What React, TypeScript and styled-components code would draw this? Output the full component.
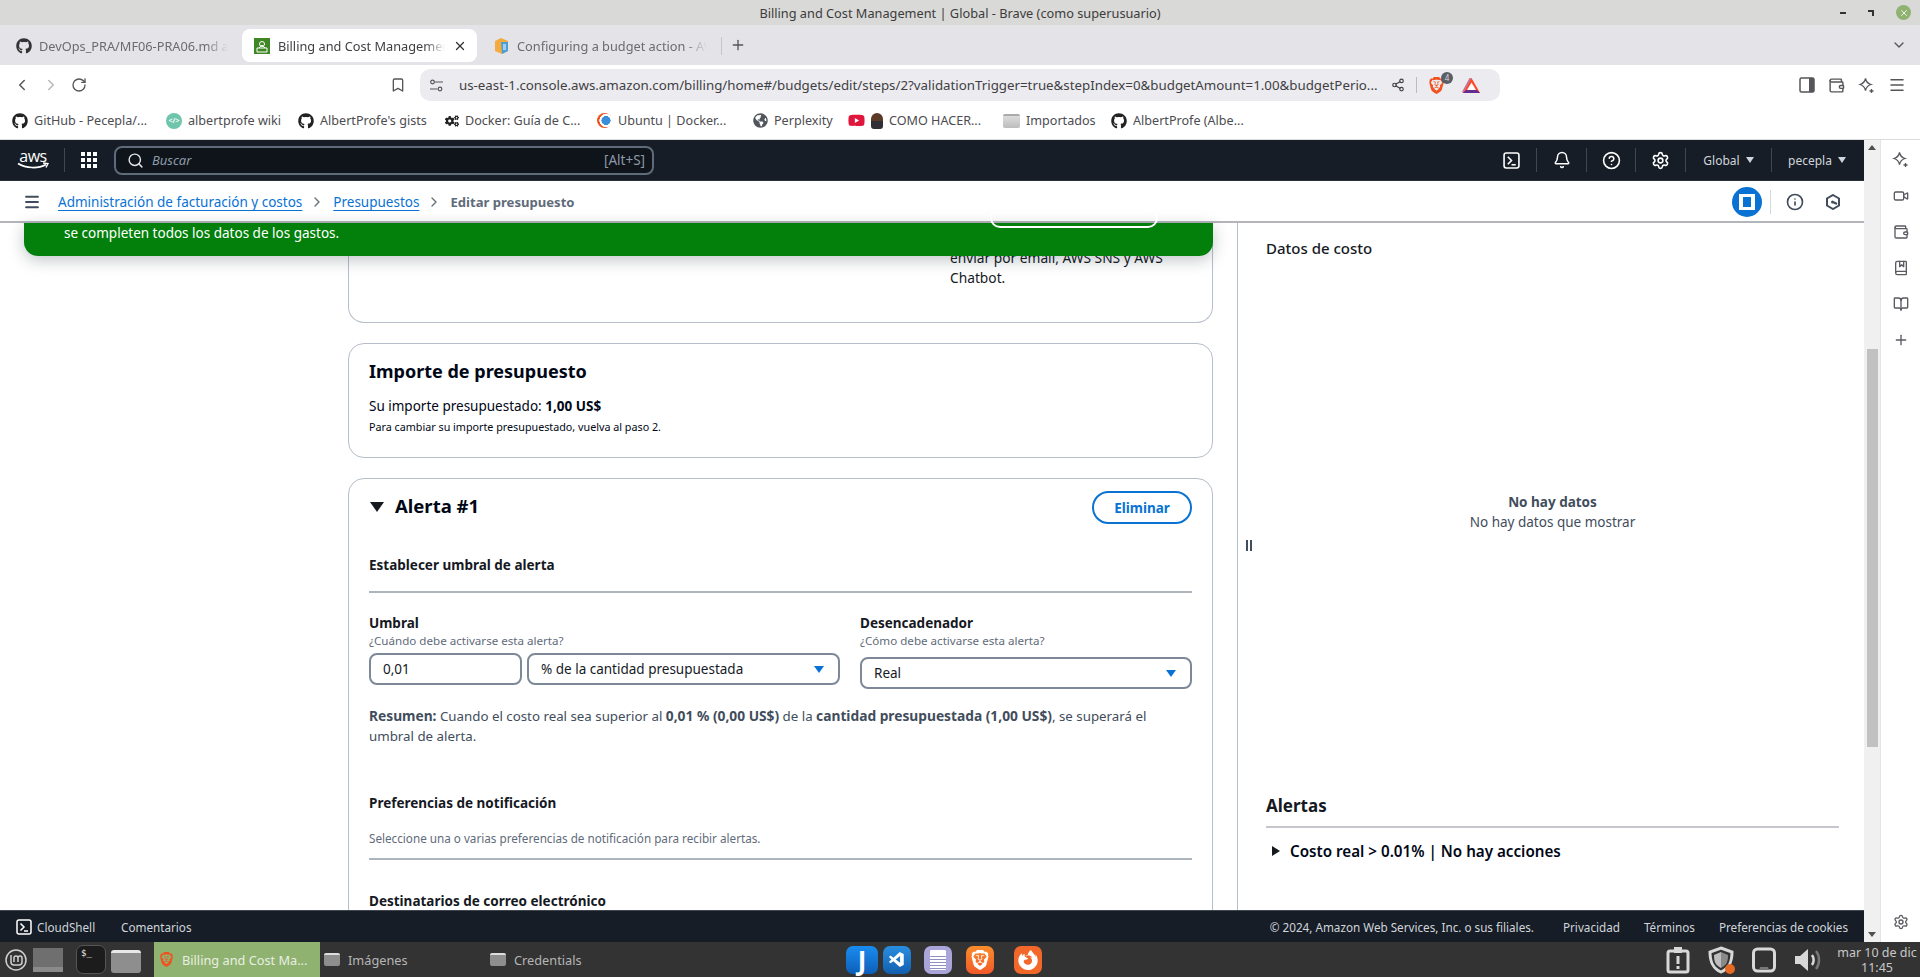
import React from 'react';
import styled, { createGlobalStyle } from 'styled-components';
import {
    Bell,
    Bookmark,
    BookMarked,
    BookOpen,
    ChevronLeft,
    ChevronRight,
    ChevronDown,
    CircleHelp,
    Info,
    Menu,
    Plus,
    RotateCw,
    Search,
    Settings,
    Share2,
    Video,
    Wallet,
    X,
} from 'lucide-react';
import { FaCogs, FaGithub, FaGlobeAmericas, FaYoutube } from 'react-icons/fa';
import { SiBrave, SiFirefoxbrowser } from 'react-icons/si';
import { VscVscode } from 'react-icons/vsc';

const GlobalStyle = createGlobalStyle`
    html, body {
        margin: 0;
        padding: 0;
        width: 1920px;
        height: 977px;
        overflow: hidden;
        background: #fff;
    }
    * {
        box-sizing: border-box;
    }
    body {
        font-family: "Noto Sans", "Open Sans", sans-serif;
    }
`;

const Screen = styled.div`
    display: flex;
    flex-direction: column;
    width: 1920px;
    height: 977px;
    overflow: hidden;
`;

/* browser chrome */

const TitleBar = styled.div`
    display: flex;
    align-items: center;
    justify-content: center;
    position: relative;
    height: 25px;
    background: #d9d9d7;
    font-size: 12.75px;
    color: #3c3c3c;
`;

const WindowControls = styled.div`
    position: absolute;
    right: 9px;
    top: 0;
    height: 25px;
    display: flex;
    align-items: center;
    gap: 22px;
`;

const MinimizeMark = styled.span`
    width: 6px;
    height: 2px;
    background: #333;
`;

const RestoreMark = styled.span`
    width: 6px;
    height: 6px;
    border-top: 2px solid #333;
    border-right: 2px solid #333;
`;

const CloseDot = styled.span`
    display: flex;
    align-items: center;
    justify-content: center;
    width: 15px;
    height: 15px;
    border-radius: 50%;
    background: #8fb271;
    color: #fff;
`;

const TabStrip = styled.div`
    display: flex;
    align-items: flex-start;
    height: 40px;
    padding: 4px 13px 0 4px;
    gap: 4px;
    background: #e3e3e8;
    color: #55555a;
`;

const Tab = styled.div<{ $active?: boolean; $w: number }>`
    display: flex;
    align-items: center;
    gap: ${(p) => (p.$active ? 8 : 7)}px;
    width: ${(p) => p.$w}px;
    height: 33px;
    padding-left: 12px;
    padding-right: 10px;
    border-radius: 8px;
    font-size: 12.75px;
    background: ${(p) => (p.$active ? '#fff' : 'transparent')};
    color: ${(p) => (p.$active ? '#3f3f44' : '#6b6b70')};
`;

const TabLabel = styled.span`
    flex: 1;
    white-space: nowrap;
    overflow: hidden;
    -webkit-mask-image: linear-gradient(90deg, #000 88%, transparent);
    mask-image: linear-gradient(90deg, #000 88%, transparent);
`;

const TabDivider = styled.span`
    width: 1px;
    height: 18px;
    margin-top: 8px;
    background: #c4c4ca;
`;

const NewTab = styled.span`
    display: flex;
    margin: 8px 0 0 4px;
    flex: 1;
`;

const Toolbar = styled.div`
    display: flex;
    align-items: center;
    height: 40px;
    padding: 0 14px 0 13px;
    background: #fff;
    color: #55555a;
`;

const ToolbarGroup = styled.div<{ $gap: number; $w?: number }>`
    display: flex;
    align-items: center;
    gap: ${(p) => p.$gap}px;
    width: ${(p) => (p.$w ? `${p.$w}px` : 'auto')};
`;

const AddressBar = styled.div`
    display: flex;
    align-items: center;
    width: 1080px;
    height: 32px;
    margin: 0 299px 0 0;
    padding: 0 19px 0 9px;
    gap: 11px;
    border-radius: 10px;
    background: #ecebf0;
    font-size: 13.3px;
    color: #3f3f44;
`;

const UrlText = styled.span`
    flex: 1;
    margin-left: 4px;
    white-space: nowrap;
    overflow: hidden;
`;

const AddressSep = styled.span`
    width: 1px;
    height: 16px;
    background: #bcbcc2;
`;

const ShieldWrap = styled.span`
    display: flex;
    position: relative;
    margin-right: 6px;
    color: #f1521f;
`;

const ShieldBadge = styled.span`
    position: absolute;
    right: -8px;
    top: -5px;
    width: 12px;
    height: 12px;
    border-radius: 50%;
    background: #5a5d66;
    color: #ddd;
    font-size: 8px;
    line-height: 12px;
    text-align: center;
`;

const BookmarksBar = styled.div`
    display: flex;
    align-items: center;
    height: 35px;
    padding: 0 0 3px 12px;
    background: #fff;
    border-bottom: 1px solid #dcdce0;
`;

const BookmarkItem = styled.div<{ $w: number }>`
    display: flex;
    align-items: center;
    gap: 6px;
    width: ${(p) => p.$w}px;
    font-size: 12.6px;
    color: #4c4c50;
    white-space: nowrap;
`;

const WikiIcon = styled.span`
    display: flex;
    align-items: center;
    justify-content: center;
    width: 16px;
    height: 16px;
    border-radius: 50%;
    background: #6fc5ab;
    color: #fff;
    font-size: 7px;
    font-weight: 700;
`;

const UbuntuIcon = styled.span`
    width: 15px;
    height: 15px;
    border-radius: 50%;
    background: radial-gradient(circle at 60% 50%, #3a8fd8 0 38%, #fff 40% 55%, #e95420 58%);
`;

const AvatarIcon = styled.span`
    width: 12px;
    height: 16px;
    border-radius: 6px 6px 3px 3px;
    background: linear-gradient(#5b3a26 0 50%, #2f2f35 50%);
`;

const FolderBookmark = styled.span`
    width: 17px;
    height: 14px;
    border-radius: 2px;
    background: linear-gradient(#dcdcdc, #bdbdbd);
    border-top: 2px solid #aaa;
`;

/* console layout */

const ConsoleArea = styled.div`
    display: flex;
    flex: 1;
    min-height: 0;
`;

const ConsoleColumn = styled.div`
    display: flex;
    flex-direction: column;
    width: 1864px;
    min-height: 0;
`;

const TopNav = styled.div`
    display: flex;
    align-items: center;
    flex: none;
    height: 41px;
    padding: 0 2px 0 17px;
    background: #161d26;
    border-bottom: 1px solid #2a313b;
    color: #fff;
`;

const AwsLogo = styled.div`
    display: flex;
    flex-direction: column;
    align-items: center;
    width: 32px;
    margin-right: 15px;
    color: #fff;
`;

const AwsWord = styled.span`
    font-family: "Open Sans", sans-serif;
    font-size: 16px;
    line-height: 12px;
    font-weight: 500;
    letter-spacing: -0.5px;
`;

const NavDivider = styled.span`
    width: 1px;
    height: 24px;
    background: #414750;
`;

const GridIcon = styled.div`
    display: grid;
    grid-template-columns: repeat(3, 4px);
    grid-auto-rows: 4px;
    gap: 2px;
    margin: 0 17px 0 16px;
`;

const GridDot = styled.span`
    background: #fff;
`;

const SearchBox = styled.div`
    display: flex;
    align-items: center;
    width: 540px;
    height: 29px;
    padding: 0 7px 0 11px;
    gap: 8px;
    border: 2px solid #5f6b7a;
    border-radius: 8px;
    background: #0f141a;
    font-size: 13.5px;
    color: #8d99a8;
`;

const SearchHint = styled.span`
    flex: 1;
    font-size: 13px;
    font-style: italic;
`;

const NavRight = styled.div`
    display: flex;
    align-items: center;
    height: 24px;
    margin-left: auto;
`;

const NavCell = styled.div<{ $w: number; $sep?: boolean }>`
    display: flex;
    align-items: center;
    justify-content: center;
    gap: 6px;
    width: ${(p) => p.$w}px;
    height: 24px;
    border-right: ${(p) => (p.$sep ? '1px solid #414750' : 'none')};
    font-size: 12px;
    color: #d1d5db;
`;

const Caret = styled.span<{ $color?: string; $size?: number }>`
    display: inline-block;
    width: 0;
    height: 0;
    border-left: ${(p) => p.$size ?? 4}px solid transparent;
    border-right: ${(p) => p.$size ?? 4}px solid transparent;
    border-top: ${(p) => (p.$size ?? 4) * 1.5}px solid ${(p) => p.$color ?? '#d1d5db'};
`;

const CrumbBar = styled.div`
    display: flex;
    align-items: center;
    flex: none;
    height: 42px;
    padding: 2px 23px 0 23px;
    background: #fff;
    border-bottom: 2px solid #b4b4bb;
    font-size: 13.5px;
`;

const CrumbLink = styled.a`
    color: #0972d3;
    text-decoration: underline;
    text-underline-offset: 3px;
`;

const CrumbChevron = styled.span`
    display: flex;
    margin: 0 8px 0 7px;
    color: #687078;
`;

const CrumbCurrent = styled.span`
    font-size: 13.1px;
    font-weight: 700;
    color: #5f6b7a;
`;

const CrumbHamburger = styled.span`
    display: flex;
    margin-right: 17px;
    color: #414d5c;
`;

const CrumbTools = styled.div`
    display: flex;
    align-items: center;
    margin-left: auto;
    color: #414d5c;
`;

const PanelButton = styled.span`
    display: flex;
    align-items: center;
    justify-content: center;
    width: 30px;
    height: 30px;
    border-radius: 50%;
    background: #0972d3;
    margin-right: 8px;
`;

const PanelGlyph = styled.span`
    width: 16px;
    height: 16px;
    border: 3px solid #fff;
    border-left-width: 4px;
    border-right-width: 4px;
`;

const ToolSep = styled.span`
    width: 1px;
    height: 24px;
    background: #d5dbdb;
    margin-right: 15px;
`;

const ToolSpacer = styled.span`
    width: 21px;
`;

const ContentRow = styled.div`
    display: flex;
    flex: 1;
    min-height: 0;
    position: relative;
    background: #fff;
`;

const FlashBar = styled.div`
    position: absolute;
    left: 24px;
    top: 0;
    width: 1189px;
    height: 33px;
    padding: 0 55px 0 40px;
    display: flex;
    justify-content: space-between;
    border-radius: 0 0 14px 14px;
    background: #037f0c;
    box-shadow: 0 4px 16px rgba(0, 28, 36, 0.25);
    color: #fff;
    font-size: 13.5px;
    z-index: 2;
`;

const FlashText = styled.span`
    line-height: 20px;
`;

const FlashButton = styled.span`
    width: 168px;
    height: 20px;
    margin-top: -15px;
    border: 2px solid #fff;
    border-radius: 16px;
`;

const MainColumn = styled.div`
    display: flex;
    flex-direction: column;
    flex: none;
    width: 1238px;
    padding: 0 24px 0 348px;
    gap: 20px;
    overflow: hidden;
    border-right: 1px solid #b6bec9;
`;

const TopCard = styled.section`
    flex: none;
    display: flex;
    justify-content: flex-end;
    height: 100px;
    padding: 25px 20px 0 0;
    border: 1px solid #b6bec9;
    border-top: none;
    border-radius: 0 0 16px 16px;
`;

const TopCardNote = styled.p`
    width: 242px;
    margin: 0;
    font-size: 13.75px;
    line-height: 20px;
    color: #16191f;
`;

const Card = styled.section`
    flex: none;
    padding: 16px 20px;
    border: 1px solid #b6bec9;
    border-radius: 16px;
    color: #000716;
`;

const BudgetCard = styled(Card)`
    height: 115px;
    padding-top: 15px;
`;

const CardTitle = styled.h2`
    margin: 0;
    font-size: 18px;
    line-height: 24px;
    font-weight: 700;
`;

const AmountLine = styled.p`
    margin: 13px 0 0;
    font-size: 13.5px;
    line-height: 20px;
`;

const SmallNote = styled.p`
    margin: 2px 0 0;
    font-size: 10.75px;
    line-height: 18px;
`;

const AlertHead = styled.div`
    display: flex;
    align-items: center;
    height: 33px;
    margin-top: -4px;
`;

const AlertCaret = styled.span`
    display: flex;
    padding-bottom: 2px;
    margin-left: 1px;
`;

const AlertTitle = styled.h2`
    margin: 0 0 3px 11px;
    font-size: 18.5px;
    line-height: 26px;
    font-weight: 700;
`;

const OutlineButton = styled.button`
    margin-left: auto;
    width: 100px;
    height: 33px;
    border: 2px solid #0972d3;
    border-radius: 20px;
    background: #fff;
    color: #0972d3;
    font: 700 13.5px "Noto Sans", sans-serif;
`;

const SectionTitle = styled.h3<{ $top: number }>`
    margin: ${(p) => p.$top}px 0 0;
    font-size: 13.5px;
    line-height: 20px;
    font-weight: 700;
    color: #16191f;
`;

const Rule = styled.hr<{ $top: number }>`
    margin: ${(p) => p.$top}px 0 0;
    border: none;
    border-top: 2px solid #aeb4bb;
`;

const FieldRow = styled.div`
    display: grid;
    grid-template-columns: 471px 1fr;
    column-gap: 20px;
    margin-top: 20px;
`;

const Field = styled.div`
    display: flex;
    flex-direction: column;
`;

const FieldLabel = styled.label`
    font-size: 13.5px;
    line-height: 20px;
    font-weight: 700;
    color: #16191f;
`;

const FieldHint = styled.span`
    font-size: 11.6px;
    line-height: 16px;
    color: #5f6b7a;
`;

const Controls = styled.div`
    display: flex;
    gap: 5px;
    margin-top: 4px;
`;

const TextBox = styled.div<{ $w: number }>`
    display: flex;
    align-items: center;
    width: ${(p) => p.$w}px;
    height: 32px;
    padding: 0 12px;
    border: 2px solid #7d8998;
    border-radius: 8px;
    font-size: 13.5px;
    color: #16191f;
`;

const SelectBox = styled.div<{ $offset?: number }>`
    display: flex;
    align-items: center;
    justify-content: space-between;
    flex: 1;
    height: 32px;
    margin-top: ${(p) => p.$offset ?? 0}px;
    padding: 0 14px 0 12px;
    border: 2px solid #7d8998;
    border-radius: 8px;
    font-size: 13.5px;
    color: #16191f;
`;

const Summary = styled.p`
    margin: 17px 0 0;
    font-size: 13.3px;
    line-height: 20px;
    color: #414d5c;

    b {
        font-size: 13.75px;
    }
`;

const NotificationHint = styled.p`
    margin: 17px 0 0;
    font-size: 11.7px;
    line-height: 16px;
    color: #5f6b7a;
`;

const SidePanel = styled.aside`
    display: flex;
    flex: 1;
    min-width: 0;
`;

const ResizeHandle = styled.div`
    display: flex;
    align-items: center;
    justify-content: center;
    gap: 2px;
    flex: none;
    width: 21px;
    padding-bottom: 42px;
`;

const HandleBar = styled.span`
    width: 2px;
    height: 11px;
    background: #414d5c;
`;

const SideBody = styled.div`
    display: flex;
    flex-direction: column;
    flex: 1;
    min-width: 0;
    padding: 15px 25px 0 7px;
`;

const SideTitle = styled.h3`
    margin: 0;
    font-size: 15px;
    line-height: 20px;
    font-weight: 500;
    color: #16191f;
`;

const EmptyState = styled.div`
    display: flex;
    flex-direction: column;
    align-items: center;
    justify-content: center;
    height: 519px;
    padding-bottom: 11px;
    font-size: 13.5px;
    line-height: 20px;
    color: #414d5c;
`;

const EmptyTitle = styled.strong`
    font-weight: 700;
`;

const AlertsTitle = styled.h2`
    margin: 17px 0 0;
    padding-bottom: 8px;
    border-bottom: 2px solid #c6c6cd;
    font-size: 17px;
    line-height: 24px;
    font-weight: 700;
    color: #16191f;
`;

const AlertSummaryRow = styled.div`
    display: flex;
    align-items: center;
    gap: 10px;
    margin: 12px 0 0 6px;
    font-size: 15.2px;
    line-height: 22px;
    font-weight: 600;
    color: #000716;
`;

const RightCaret = styled.span`
    width: 0;
    height: 0;
    border-top: 5px solid transparent;
    border-bottom: 5px solid transparent;
    border-left: 8px solid #16191f;
`;

const ConsoleFooter = styled.footer`
    display: flex;
    align-items: center;
    flex: none;
    height: 32px;
    padding: 0 16px;
    background: #161d26;
    border-top: 1px solid #414750;
    font-size: 11.7px;
    color: #d1d5db;
`;

const FooterLeftItem = styled.span<{ $w: number }>`
    display: flex;
    align-items: center;
    gap: 5px;
    width: ${(p) => p.$w}px;
`;

const FooterRight = styled.div`
    display: flex;
    align-items: center;
    margin-left: auto;
    gap: 24px;
`;

const Copyright = styled.span`
    margin-right: 5px;
`;

const ScrollTrack = styled.div`
    display: flex;
    flex-direction: column;
    align-items: center;
    flex: none;
    width: 16px;
    background: #f0f0f0;
`;

const ScrollArrowUp = styled.span`
    margin-top: 5px;
    border-left: 4px solid transparent;
    border-right: 4px solid transparent;
    border-bottom: 5px solid #505050;
`;

const ScrollArrowDown = styled.span`
    margin-top: auto;
    margin-bottom: 5px;
    border-left: 4px solid transparent;
    border-right: 4px solid transparent;
    border-top: 5px solid #505050;
`;

const ScrollThumb = styled.span`
    width: 11px;
    height: 398px;
    margin-top: 199px;
    background: #c1c1c1;
`;

const SideRail = styled.nav`
    display: flex;
    flex-direction: column;
    align-items: center;
    flex: none;
    width: 40px;
    padding-top: 11px;
    gap: 20px;
    background: #fff;
    border-left: 1px solid #e4e4e8;
    color: #5a5a60;
`;

const RailBottom = styled.span`
    display: flex;
    margin-top: auto;
    margin-bottom: 12px;
`;

/* desktop taskbar */

const Taskbar = styled.div`
    display: flex;
    align-items: center;
    flex: none;
    height: 35px;
    background: #333333;
    color: #c0c0c0;
    font-size: 12.75px;
`;

const TaskbarLeft = styled.div`
    display: flex;
    align-items: center;
    width: 846px;
    height: 35px;
    padding-left: 5px;
`;

const MintLogo = styled.span`
    display: flex;
    margin-right: 6px;
`;

const DesktopTile = styled.span`
    width: 30px;
    height: 24px;
    margin-right: 13px;
    background: linear-gradient(#6f6f6f 0 80%, #8a8a8a 80%);
`;

const TerminalTile = styled.span`
    width: 30px;
    height: 29px;
    margin-right: 5px;
    padding: 2px 4px;
    border: 1px solid #555;
    border-radius: 7px;
    background: #1c1c1c;
    color: #eee;
    font: 9px "DejaVu Sans Mono", monospace;
`;

const FolderTile = styled.span`
    width: 30px;
    height: 23px;
    margin-top: 3px;
    margin-right: 13px;
    border-top: 3px solid #e8e8e8;
    border-radius: 3px;
    background: #8e8e8e;
`;

const WindowButton = styled.div<{ $active?: boolean; $w: number }>`
    display: flex;
    align-items: center;
    gap: 8px;
    width: ${(p) => p.$w}px;
    height: 35px;
    padding-left: ${(p) => (p.$active ? 5 : 4)}px;
    background: ${(p) => (p.$active ? '#8fb271' : 'transparent')};
    color: ${(p) => (p.$active ? '#e8efe0' : '#b5b5b5')};
`;

const WindowFolder = styled.span`
    width: 16px;
    height: 13px;
    border-top: 2px solid #ddd;
    border-radius: 2px;
    background: #8e8e8e;
`;

const DockTray = styled.div`
    display: flex;
    align-items: center;
`;

const AppTile = styled.span<{ $bg: string; $w: number; $mr: number }>`
    display: flex;
    align-items: center;
    justify-content: center;
    width: ${(p) => p.$w}px;
    height: 28px;
    margin-right: ${(p) => p.$mr}px;
    border-radius: 7px;
    background: ${(p) => p.$bg};
    color: #fff;
`;

const JoplinLetter = styled.span`
    font: 700 26px/28px "Noto Sans", sans-serif;
`;

const NoteLines = styled.span`
    width: 16px;
    height: 20px;
    padding: 5px 3px;
    background: #fff;
    background-clip: padding-box;
    border-radius: 1px;
    box-shadow: inset 0 6px 0 #fff;
    background-image: repeating-linear-gradient(#8f8ec4 0 1px, #fff 1px 3px);
`;

const SystemTray = styled.div`
    display: flex;
    align-items: center;
    margin-left: auto;
    color: #d8d8d8;
`;

const Clock = styled.div`
    width: 86px;
    margin-left: 11px;
    text-align: center;
    font-size: 12.5px;
    line-height: 15px;
    color: #c8c8c8;
`;

const TrayBlock = styled.span<{ $mr: number }>`
    display: flex;
    margin-right: ${(p) => p.$mr}px;
`;

function BudgetFavicon() {
    return (
        <svg width="16" height="16" viewBox="0 0 16 16">
            <rect width="16" height="16" fill="#3f8624" />
            <circle cx="8" cy="6" r="2.5" fill="none" stroke="#fff" />
            <path d="M3 10h10v4H3zM5 10l3-3 3 3" fill="none" stroke="#fff" />
        </svg>
    );
}

function DocsFavicon() {
    return (
        <svg width="17" height="17" viewBox="0 0 17 17">
            <path d="M2 4l6-3 7 3v10l-6 3-7-3z" fill="#f4ab3e" />
            <path d="M8 5h7v9l-6 3z" fill="#4b9fd8" />
            <path d="M10 8h3M10 10h3M10 12h3" stroke="#fff" />
        </svg>
    );
}

function BatTriangle() {
    return (
        <svg width="19" height="17" viewBox="0 0 19 17">
            <path d="M9.5 1L18 16H1z" fill="#ff4724" />
            <path d="M1 16h17l-3-3H4z" fill="#662d91" />
            <path d="M9.5 5.5L14 13H5z" fill="#fff" />
            <path d="M1 16L9.5 1 7.5 1 0 15z" fill="#9e1f63" opacity="0.6" />
        </svg>
    );
}

function SiteControlsIcon() {
    return (
        <svg width="15" height="15" viewBox="0 0 15 15" fill="none" stroke="#55555a" strokeWidth="1.2">
            <circle cx="3.5" cy="4" r="1.8" />
            <path d="M5.5 4H14M1 11h7.5" />
            <circle cx="11" cy="11" r="1.8" />
        </svg>
    );
}

function StarPlusIcon() {
    return (
        <svg width="17" height="17" viewBox="0 0 17 17" fill="none" stroke="#55555a" strokeWidth="1.3">
            <path d="M7.5 1.5c.7 3.4 2 5 5.5 6-3.5 1-4.8 2.6-5.5 6-.7-3.4-2-5-5.5-6 3.5-1 4.8-2.6 5.5-6z" />
            <path d="M13.5 12v4M11.5 14h4" />
        </svg>
    );
}

function AwsSmile() {
    return (
        <svg width="32" height="8" viewBox="0 0 32 8">
            <path d="M1 1.5c8 5 20 5.5 28 1" fill="none" stroke="#fff" strokeWidth="1.6" />
            <path d="M26 1l5 .5-2 4" fill="none" stroke="#fff" strokeWidth="1.4" />
        </svg>
    );
}

function TerminalIcon({ size }: { size: number }) {
    return (
        <svg width={size} height={size} viewBox="0 0 16 16">
            <rect x="1" y="1" width="14" height="14" rx="2" fill="none" stroke="#fff" strokeWidth="1.5" />
            <path d="M4.5 4.5L8 8l-3.5 3.5" fill="none" stroke="#fff" strokeWidth="1.5" />
            <path d="M8 12h4" stroke="#fff" strokeWidth="1.5" />
        </svg>
    );
}

function HexClockIcon() {
    return (
        <svg width="16" height="16" viewBox="0 0 16 16">
            <path d="M8 1l6 3.5v7L8 15l-6-3.5v-7z" fill="none" stroke="#414d5c" strokeWidth="2" />
            <path d="M8 8l4 2" stroke="#414d5c" strokeWidth="2" />
            <circle cx="7.5" cy="8" r="1.5" fill="#414d5c" />
        </svg>
    );
}

function MintIcon() {
    return (
        <svg width="22" height="22" viewBox="0 0 22 22">
            <circle cx="11" cy="11" r="10" fill="none" stroke="#d0d0d0" strokeWidth="1.5" />
            <path
                d="M6 6v7a3 3 0 0 0 3 3h5a3 3 0 0 0 3-3V9a2 2 0 0 0-4 0v4M9 13V9a2 2 0 0 1 4 0"
                fill="none"
                stroke="#d0d0d0"
                strokeWidth="1.5"
            />
        </svg>
    );
}

function ClipboardTray() {
    return (
        <svg width="24" height="28" viewBox="0 0 24 28">
            <rect x="2" y="5" width="20" height="21" rx="2" fill="none" stroke="#d8d8d8" strokeWidth="3" />
            <rect x="8" y="1" width="8" height="6" fill="#d8d8d8" />
            <path d="M12 10v8M12 20v3" stroke="#d8d8d8" strokeWidth="3" />
        </svg>
    );
}

function ShieldTray() {
    return (
        <svg width="28" height="28" viewBox="0 0 28 28">
            <path d="M13 2l11 4c0 9-2 16-11 20C4 22 2 15 2 6z" fill="none" stroke="#d8d8d8" strokeWidth="3" />
            <path d="M13 6l7 3c0 6-1 10-7 13z" fill="#8a8a8a" />
            <path d="M13 6L6 9c0 6 1 10 7 13z" fill="#bdbdbd" />
            <circle cx="22" cy="23" r="5" fill="#e66a22" />
        </svg>
    );
}

function DeviceTray() {
    return (
        <svg width="24" height="26" viewBox="0 0 24 26">
            <rect x="1.5" y="2" width="21" height="22" rx="4" fill="none" stroke="#d8d8d8" strokeWidth="3" />
            <path d="M8 20h8l1 3H7z" fill="#777" />
        </svg>
    );
}

function SoundTray() {
    return (
        <svg width="29" height="26" viewBox="0 0 29 26">
            <path d="M1 9h5l8-7v22l-8-7H1z" fill="#d8d8d8" />
            <path d="M18 8c2 3 2 7 0 10" fill="none" stroke="#d8d8d8" strokeWidth="2.5" />
            <path d="M22 4c4 5 4 13 0 18" fill="none" stroke="#777" strokeWidth="2.5" />
        </svg>
    );
}

const GRID_DOTS = Array.from({ length: 9 }, (_, i) => i);

export default function App() {
    return (
        <Screen>
            <GlobalStyle />
            <TitleBar>
                Billing and Cost Management | Global - Brave (como superusuario)
                <WindowControls>
                    <MinimizeMark />
                    <RestoreMark />
                    <CloseDot>
                        <X size={10} strokeWidth={2} />
                    </CloseDot>
                </WindowControls>
            </TitleBar>

            <TabStrip>
                <Tab $w={234}>
                    <FaGithub size={16} color="#333" />
                    <TabLabel>DevOps_PRA/MF06-PRA06.md at main</TabLabel>
                </Tab>
                <Tab $w={235} $active>
                    <BudgetFavicon />
                    <TabLabel>Billing and Cost Management</TabLabel>
                    <X size={14} strokeWidth={2.2} color="#333" />
                </Tab>
                <Tab $w={236}>
                    <DocsFavicon />
                    <TabLabel>Configuring a budget action - AWS</TabLabel>
                </Tab>
                <TabDivider />
                <NewTab>
                    <Plus size={16} />
                </NewTab>
                <ChevronDown size={16} style={{ marginTop: 8 }} />
            </TabStrip>

            <Toolbar>
                <ToolbarGroup $gap={11} $w={377}>
                    <ChevronLeft size={18} />
                    <ChevronRight size={18} color="#b9b9bd" />
                    <RotateCw size={16} />
                </ToolbarGroup>
                <ToolbarGroup $gap={0} $w={30}>
                    <Bookmark size={16} />
                </ToolbarGroup>
                <AddressBar>
                    <SiteControlsIcon />
                    <UrlText>
                        us-east-1.console.aws.amazon.com/billing/home#/budgets/edit/steps/2?validationTrigger=true&amp;stepIndex=0&amp;budgetAmount=1.00&amp;budgetPerio...
                    </UrlText>
                    <Share2 size={14} />
                    <AddressSep />
                    <ShieldWrap>
                        <SiBrave size={17} />
                        <ShieldBadge>4</ShieldBadge>
                    </ShieldWrap>
                    <BatTriangle />
                </AddressBar>
                <ToolbarGroup $gap={13}>
                    <svg width="16" height="16" viewBox="0 0 16 16">
                        <rect x="1" y="1" width="14" height="14" rx="1.5" fill="none" stroke="#55555a" strokeWidth="1.5" />
                        <rect x="10" y="1" width="5" height="14" fill="#55555a" />
                    </svg>
                    <Wallet size={17} />
                    <StarPlusIcon />
                    <Menu size={18} />
                </ToolbarGroup>
            </Toolbar>

            <BookmarksBar>
                <BookmarkItem $w={154}>
                    <FaGithub size={16} color="#222" />
                    GitHub - Pecepla/...
                </BookmarkItem>
                <BookmarkItem $w={132}>
                    <WikiIcon>&lt;/&gt;</WikiIcon>
                    albertprofe wiki
                </BookmarkItem>
                <BookmarkItem $w={147}>
                    <FaGithub size={16} color="#222" />
                    AlbertProfe's gists
                </BookmarkItem>
                <BookmarkItem $w={152}>
                    <FaCogs size={14} color="#222" />
                    Docker: Guía de C...
                </BookmarkItem>
                <BookmarkItem $w={156}>
                    <UbuntuIcon />
                    Ubuntu | Docker...
                </BookmarkItem>
                <BookmarkItem $w={95}>
                    <FaGlobeAmericas size={15} color="#50565c" />
                    Perplexity
                </BookmarkItem>
                <BookmarkItem $w={155}>
                    <FaYoutube size={17} color="#e0163c" />
                    <AvatarIcon />
                    COMO HACER...
                </BookmarkItem>
                <BookmarkItem $w={108}>
                    <FolderBookmark />
                    Importados
                </BookmarkItem>
                <BookmarkItem $w={160}>
                    <FaGithub size={16} color="#222" />
                    AlbertProfe (Albe...
                </BookmarkItem>
            </BookmarksBar>

            <ConsoleArea>
                <ConsoleColumn>
                    <TopNav>
                        <AwsLogo>
                            <AwsWord>aws</AwsWord>
                            <AwsSmile />
                        </AwsLogo>
                        <NavDivider />
                        <GridIcon>
                            {GRID_DOTS.map((i) => (
                                <GridDot key={i} />
                            ))}
                        </GridIcon>
                        <SearchBox>
                            <Search size={17} color="#e5e7eb" />
                            <SearchHint>Buscar</SearchHint>
                            [Alt+S]
                        </SearchBox>
                        <NavRight>
                            <NavCell $w={50} $sep>
                                <TerminalIcon size={17} />
                            </NavCell>
                            <NavCell $w={50} $sep>
                                <Bell size={18} color="#fff" />
                            </NavCell>
                            <NavCell $w={49} $sep>
                                <CircleHelp size={19} color="#fff" />
                            </NavCell>
                            <NavCell $w={50} $sep>
                                <Settings size={19} color="#fff" />
                            </NavCell>
                            <NavCell $w={86} $sep>
                                Global
                                <Caret />
                            </NavCell>
                            <NavCell $w={90}>
                                pecepla
                                <Caret />
                            </NavCell>
                        </NavRight>
                    </TopNav>

                    <CrumbBar>
                        <CrumbHamburger>
                            <Menu size={18} strokeWidth={2.4} />
                        </CrumbHamburger>
                        <CrumbLink>Administración de facturación y costos</CrumbLink>
                        <CrumbChevron>
                            <ChevronRight size={16} />
                        </CrumbChevron>
                        <CrumbLink>Presupuestos</CrumbLink>
                        <CrumbChevron>
                            <ChevronRight size={16} />
                        </CrumbChevron>
                        <CrumbCurrent>Editar presupuesto</CrumbCurrent>
                        <CrumbTools>
                            <PanelButton>
                                <PanelGlyph />
                            </PanelButton>
                            <ToolSep />
                            <Info size={18} strokeWidth={2.2} />
                            <ToolSpacer />
                            <HexClockIcon />
                        </CrumbTools>
                    </CrumbBar>

                    <ContentRow>
                        <FlashBar>
                            <FlashText>se completen todos los datos de los gastos.</FlashText>
                            <FlashButton />
                        </FlashBar>

                        <MainColumn>
                            <TopCard>
                                <TopCardNote>
                                    enviar por email, AWS SNS y AWS Chatbot.
                                </TopCardNote>
                            </TopCard>

                            <BudgetCard>
                                <CardTitle>Importe de presupuesto</CardTitle>
                                <AmountLine>
                                    Su importe presupuestado: <b>1,00 US$</b>
                                </AmountLine>
                                <SmallNote>
                                    Para cambiar su importe presupuestado, vuelva al paso 2.
                                </SmallNote>
                            </BudgetCard>

                            <Card>
                                <AlertHead>
                                    <AlertCaret>
                                        <Caret $color="#16191f" $size={7} />
                                    </AlertCaret>
                                    <AlertTitle>Alerta #1</AlertTitle>
                                    <OutlineButton>Eliminar</OutlineButton>
                                </AlertHead>
                                <SectionTitle $top={31}>Establecer umbral de alerta</SectionTitle>
                                <Rule $top={16} />
                                <FieldRow>
                                    <Field>
                                        <FieldLabel>Umbral</FieldLabel>
                                        <FieldHint>¿Cuándo debe activarse esta alerta?</FieldHint>
                                        <Controls>
                                            <TextBox $w={153}>0,01</TextBox>
                                            <SelectBox>
                                                % de la cantidad presupuestada
                                                <Caret $color="#0972d3" $size={5} />
                                            </SelectBox>
                                        </Controls>
                                    </Field>
                                    <Field>
                                        <FieldLabel>Desencadenador</FieldLabel>
                                        <FieldHint>¿Cómo debe activarse esta alerta?</FieldHint>
                                        <Controls>
                                            <SelectBox $offset={4}>
                                                Real
                                                <Caret $color="#0972d3" $size={5} />
                                            </SelectBox>
                                        </Controls>
                                    </Field>
                                </FieldRow>
                                <Summary>
                                    <b>Resumen:</b> Cuando el costo real sea superior al{' '}
                                    <b>0,01 % (0,00 US$)</b> de la{' '}
                                    <b>cantidad presupuestada (1,00 US$)</b>, se superará el umbral de
                                    alerta.
                                </Summary>
                                <SectionTitle $top={47}>Preferencias de notificación</SectionTitle>
                                <NotificationHint>
                                    Seleccione una o varias preferencias de notificación para recibir
                                    alertas.
                                </NotificationHint>
                                <Rule $top={12} />
                                <SectionTitle $top={31}>Destinatarios de correo electrónico</SectionTitle>
                            </Card>
                        </MainColumn>

                        <SidePanel>
                            <ResizeHandle>
                                <HandleBar />
                                <HandleBar />
                            </ResizeHandle>
                            <SideBody>
                                <SideTitle>Datos de costo</SideTitle>
                                <EmptyState>
                                    <EmptyTitle>No hay datos</EmptyTitle>
                                    No hay datos que mostrar
                                </EmptyState>
                                <AlertsTitle>Alertas</AlertsTitle>
                                <AlertSummaryRow>
                                    <RightCaret />
                                    Costo real &gt; 0.01% | No hay acciones
                                </AlertSummaryRow>
                            </SideBody>
                        </SidePanel>
                    </ContentRow>

                    <ConsoleFooter>
                        <FooterLeftItem $w={105}>
                            <TerminalIcon size={16} />
                            CloudShell
                        </FooterLeftItem>
                        <FooterLeftItem $w={90}>Comentarios</FooterLeftItem>
                        <FooterRight>
                            <Copyright>© 2024, Amazon Web Services, Inc. o sus filiales.</Copyright>
                            <span>Privacidad</span>
                            <span>Términos</span>
                            <span>Preferencias de cookies</span>
                        </FooterRight>
                    </ConsoleFooter>
                </ConsoleColumn>

                <ScrollTrack>
                    <ScrollArrowUp />
                    <ScrollThumb />
                    <ScrollArrowDown />
                </ScrollTrack>

                <SideRail>
                    <StarPlusIcon />
                    <Video size={16} />
                    <Wallet size={16} />
                    <BookMarked size={16} />
                    <BookOpen size={16} />
                    <Plus size={16} />
                    <RailBottom>
                        <Settings size={16} />
                    </RailBottom>
                </SideRail>
            </ConsoleArea>

            <Taskbar>
                <TaskbarLeft>
                    <MintLogo>
                        <MintIcon />
                    </MintLogo>
                    <DesktopTile />
                    <TerminalTile>$_</TerminalTile>
                    <FolderTile />
                    <WindowButton $w={166} $active>
                        <SiBrave size={15} color="#f1521f" />
                        Billing and Cost Ma...
                    </WindowButton>
                    <WindowButton $w={166}>
                        <WindowFolder />
                        Imágenes
                    </WindowButton>
                    <WindowButton $w={166}>
                        <WindowFolder />
                        Credentials
                    </WindowButton>
                </TaskbarLeft>
                <DockTray>
                    <AppTile $bg="linear-gradient(#1a8cf0, #0d5fb8)" $w={32} $mr={5}>
                        <JoplinLetter>J</JoplinLetter>
                    </AppTile>
                    <AppTile $bg="linear-gradient(#2a8ee0, #125fae)" $w={28} $mr={13}>
                        <VscVscode size={18} />
                    </AppTile>
                    <AppTile $bg="#a9a5d8" $w={28} $mr={14}>
                        <NoteLines />
                    </AppTile>
                    <AppTile $bg="linear-gradient(#f98d2c, #f2592a)" $w={28} $mr={20}>
                        <SiBrave size={20} />
                    </AppTile>
                    <AppTile $bg="#f2682a" $w={28} $mr={0}>
                        <SiFirefoxbrowser size={20} />
                    </AppTile>
                </DockTray>
                <SystemTray>
                    <TrayBlock $mr={18}>
                        <ClipboardTray />
                    </TrayBlock>
                    <TrayBlock $mr={16}>
                        <ShieldTray />
                    </TrayBlock>
                    <TrayBlock $mr={18}>
                        <DeviceTray />
                    </TrayBlock>
                    <TrayBlock $mr={0}>
                        <SoundTray />
                    </TrayBlock>
                    <Clock>
                        mar 10 de dic
                        <br />
                        11:45
                    </Clock>
                </SystemTray>
            </Taskbar>
        </Screen>
    );
}
